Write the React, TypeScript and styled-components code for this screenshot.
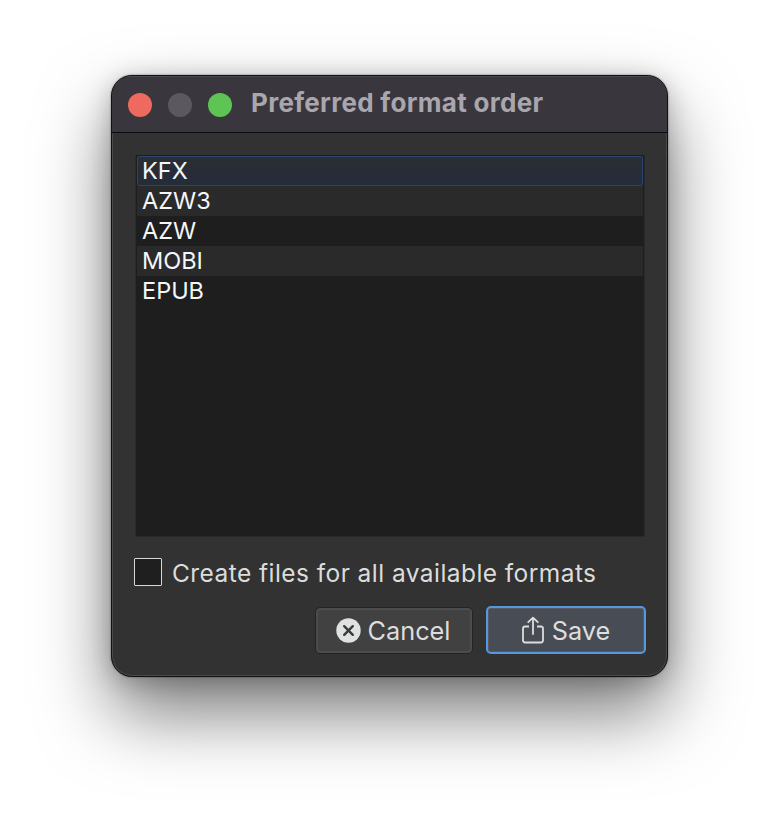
import React from "react";
import styled, { createGlobalStyle } from "styled-components";

const Global = createGlobalStyle`
  html, body { margin: 0; padding: 0; background: #fff; }
  body { width: 780px; height: 824px; overflow: hidden; font-family: Inter, "Liberation Sans", sans-serif; }
`;

const Stage = styled.div`
  box-sizing: border-box;
  width: 780px;
  height: 824px;
  padding: 75px 0 0 111px;
`;

const Window = styled.div`
  box-sizing: border-box;
  width: 557px;
  height: 602px;
  display: flex;
  flex-direction: column;
  background: #323232;
  border-radius: 21px;
  border: 1px solid #111;
  box-shadow: inset 0 0 0 1px #4a4a4c, 0 0 2px rgba(0, 0, 0, 0.5), 0 36px 72px rgba(0, 0, 0, 0.52), 0 4px 24px rgba(0, 0, 0, 0.22);
  overflow: hidden;
`;

const TitleBar = styled.div`
  box-sizing: border-box;
  height: 57px;
  flex: none;
  display: flex;
  align-items: center;
  gap: 16px;
  padding: 0 0 0 16px;
  background: #39363d;
  border-top: 1px solid #4a4a4c;
  border-bottom: 1px solid #0c0c0c;
`;

const Light = styled.span<{ $c: string }>`
  width: 24px;
  height: 24px;
  border-radius: 50%;
  background: ${(p) => p.$c};
`;

const Title = styled.div`
  margin: -4px 0 0 3px;
  color: #a9a6ad;
  font-size: 26px;
  font-weight: 700;
  letter-spacing: 0.3px;
  line-height: 30px;
`;

const Body = styled.div`
  flex: 1;
  display: flex;
  flex-direction: column;
  padding: 22px 22px 0 23px;
`;

const List = styled.div`
  box-sizing: border-box;
  height: 382px;
  background: #1e1e1e;
  padding: 1px 1px 0 1px;
  border: 1px solid #2a2a2a;
  border-top: 0;
`;

const Row = styled.div<{ $alt?: boolean; $current?: boolean }>`
  box-sizing: border-box;
  height: 30px;
  padding: 0 0 0 ${(p) => (p.$current ? 4 : 5)}px;
  color: #f4f6f8;
  font-size: 23.5px;
  background: ${(p) => (p.$current ? "linear-gradient(#2b2d33, #252c3a)" : p.$alt ? "#2a2a2a" : "#1e1e1e")};
  border: ${(p) => (p.$current ? "1px solid #2a4570" : "0")};
  border-radius: ${(p) => (p.$current ? "2px" : "0")};
  line-height: ${(p) => (p.$current ? "27px" : "30px")};
`;

const CheckRow = styled.label`
  display: flex;
  align-items: center;
  gap: 10px;
  margin: 21px 0 0 -1px;
  height: 28px;
`;

const CheckBox = styled.span`
  box-sizing: border-box;
  width: 28px;
  height: 28px;
  background: #1f1f1f;
  border: 1.5px solid #d8d8d8;
  border-radius: 1px;
`;

const CheckLabel = styled.span`
  margin-top: 2px;
  color: #dcdcdc;
  font-size: 24.5px;
  line-height: 32px;
  letter-spacing: 0.44px;
`;

const Buttons = styled.div`
  display: flex;
  justify-content: flex-end;
  gap: 13px;
  margin: 20px -1px 0 0;
`;

const Button = styled.button<{ $primary?: boolean }>`
  box-sizing: border-box;
  height: ${(p) => (p.$primary ? 48 : 47)}px;
  width: ${(p) => (p.$primary ? 160 : 158)}px;
  margin-top: ${(p) => (p.$primary ? 0 : 1)}px;
  display: flex;
  align-items: center;
  justify-content: center;
  gap: ${(p) => (p.$primary ? 8 : 7)}px;
  padding: ${(p) => (p.$primary ? "0 0 0 0" : "0 2px 0 0")};
  color: #dddddd;
  font-family: inherit;
  font-size: 25.3px;
  background: ${(p) => (p.$primary ? "#484c55" : "#414141")};
  border: ${(p) => (p.$primary ? "2px solid #5499e0" : "1px solid #242424")};
  box-shadow: inset 0 0 0 ${(p) => (p.$primary ? "1px #575a62" : "2px #4c4c4c")};
  border-radius: 5px;
`;

const ICON = styled.svg`
  flex: none;
  display: block;
`;

export default function App() {
  return (
    <Stage>
      <Global />
      <Window>
        <TitleBar>
          <Light $c="#ee6a5e" />
          <Light $c="#5b5860" />
          <Light $c="#5ec454" />
          <Title>Preferred format order</Title>
        </TitleBar>
        <Body>
          <List>
            <Row $current>KFX</Row>
            <Row $alt>AZW3</Row>
            <Row>AZW</Row>
            <Row $alt>MOBI</Row>
            <Row>EPUB</Row>
          </List>
          <CheckRow>
            <CheckBox />
            <CheckLabel>Create files for all available formats</CheckLabel>
          </CheckRow>
          <Buttons>
            <Button>
              <ICON width="25" height="25" viewBox="0 0 25 25">
                <circle cx="12.5" cy="12.5" r="12.2" fill="#e0e2e1" />
                <path d="M8.2 8.2l8.6 8.6M16.8 8.2l-8.6 8.6" stroke="#3a3a3a" strokeWidth="2.4" strokeLinecap="round" />
              </ICON>
              Cancel
            </Button>
            <Button $primary>
              <ICON width="22" height="28" viewBox="0 0 22 28" fill="none" stroke="#dddddd" strokeWidth="1.8">
                <path d="M7 10.5H3.2A2.2 2.2 0 0 0 1 12.7v11.6a2.2 2.2 0 0 0 2.2 2.2h15.6a2.2 2.2 0 0 0 2.2-2.2V12.7a2.2 2.2 0 0 0-2.2-2.2H15" />
                <path d="M11 18V2M6.2 6.2L11 1.6l4.8 4.6" strokeLinecap="round" strokeLinejoin="round" />
              </ICON>
              Save
            </Button>
          </Buttons>
        </Body>
      </Window>
    </Stage>
  );
}
